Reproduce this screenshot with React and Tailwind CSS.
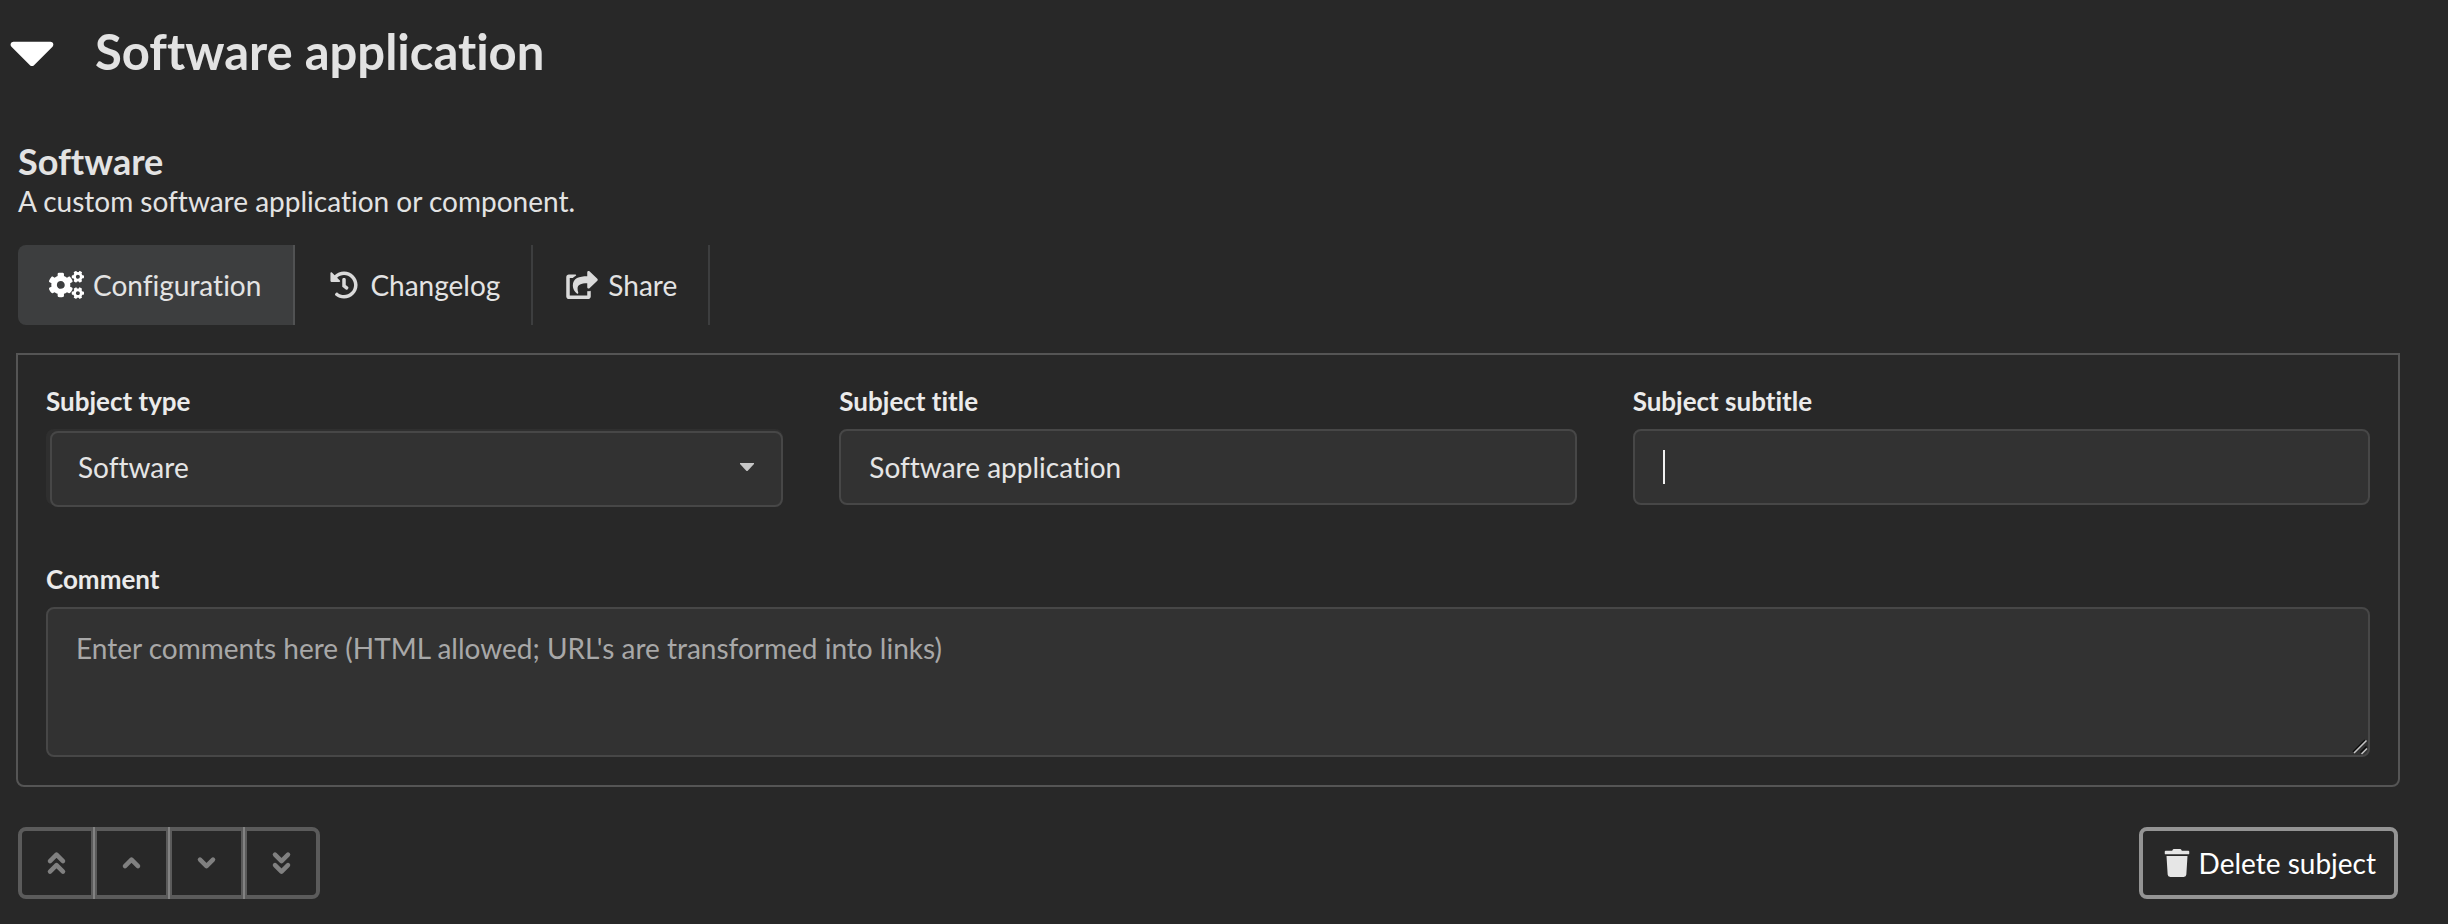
import { useState } from "react";
import { FaCaretDown, FaCogs, FaHistory, FaShareSquare, FaTrash } from "react-icons/fa";

const field =
  "block h-[76px] w-full rounded-lg border-2 border-[#474747] bg-[#323232] text-[#e5e5e5] focus:outline-none";
const label = "mb-[10px] block text-[26px] leading-9 font-bold text-[#ebebeb]";

const tabs = [
  { name: "Configuration", icon: FaCogs },
  { name: "Changelog", icon: FaHistory },
  { name: "Share", icon: FaShareSquare },
];

const moves = [
  { name: "Move to top", paths: ["M5 12.2 11.5 5.7l6.5 6.5", "M5 22.7 11.5 16.2l6.5 6.5"] },
  { name: "Move up", paths: ["M5 17.2 11.5 10.7l6.5 6.5"] },
  { name: "Move down", paths: ["M5 10.7 11.5 17.2l6.5-6.5"] },
  { name: "Move to bottom", paths: ["M5 5.7 11.5 12.2l6.5-6.5", "M5 16.2 11.5 22.7l6.5-6.5"] },
];

export default function App() {
  const [tab, setTab] = useState("Configuration");
  const [type, setType] = useState("Software");
  const [title, setTitle] = useState("Software application");
  const [subtitle, setSubtitle] = useState("");
  const [comment, setComment] = useState("");

  return (
    <div className="min-h-screen bg-[#282828] pt-[14px] pr-12 pb-6 pl-4 font-['Lato',sans-serif] text-[28px] text-[#e3e3e3] [font-variant-ligatures:none]">
      <h1 className="-ml-[7px] flex items-center text-[49px] leading-[74px] font-bold">
        <FaCaretDown className="mr-10 h-[74px] w-[46px] text-white" />
        Software application
      </h1>

      <div className="px-0.5">
        <h2 className="mt-[51px] text-[36px] leading-[44px] font-bold">Software</h2>
        <p className="leading-9">A custom software application or component.</p>
        <div className="mt-[26px] flex">
          {tabs.map(({ name, icon: Icon }) => (
            <button
              key={name}
              onClick={() => setTab(name)}
              className={`flex h-20 items-center gap-[10px] border-r-2 pr-[31px] pl-8 first:rounded-l-lg first:pr-8 ${
                tab === name ? "border-[#515253] bg-[#3d3e3f]" : "border-[#3d3e3f]"
              }`}
            >
              <span className="flex w-[33px] justify-center">
                <Icon className={name === "Configuration" ? "h-7 w-[35px] shrink-0 text-white" : "h-7 w-8 text-[#dadada]"} />
              </span>
              {name}
            </button>
          ))}
        </div>
      </div>

      <div className="mt-7 rounded-b-lg border-2 border-[#555] p-7">
        <div className="grid grid-cols-3 gap-14">
          <div>
            <label className={label} htmlFor="type">Subject type</label>
            <div className="relative h-[76px] rounded-lg bg-[#2f2f2f] pt-0.5 pl-1">
              <select
                id="type"
                className={`${field} appearance-none px-[26px] pb-1`}
                value={type}
                onChange={(e) => setType(e.target.value)}
              >
                <option>Software</option>
              </select>
              <svg viewBox="0 0 14 8" className="pointer-events-none absolute top-[34px] right-[29px] h-2 w-[14px]" fill="#c6c6c6">
                <path d="M0 0h14v1L7.5 8h-1L0 1z" />
              </svg>
            </div>
          </div>
          <div>
            <label className={label} htmlFor="title">Subject title</label>
            <input id="title" className={`${field} px-7`} value={title} onChange={(e) => setTitle(e.target.value)} />
          </div>
          <div>
            <label className={label} htmlFor="subtitle">Subject subtitle</label>
            <div className="relative">
              <input
                id="subtitle"
                className={`${field} px-7`}
                value={subtitle}
                onChange={(e) => setSubtitle(e.target.value)}
              />
              {subtitle === "" && <span className="pointer-events-none absolute top-[21px] left-[30px] h-[34px] w-0.5 bg-[#f0f0f0]" />}
            </div>
          </div>
        </div>

        <div className="mt-14">
          <label className={label} htmlFor="comment">Comment</label>
          <div className="relative">
            <textarea
              id="comment"
              className="block h-[150px] w-full resize-none rounded-lg border-2 border-[#474747] bg-[#323232] px-7 py-[18px] placeholder:text-[#a8a8a8] focus:outline-none"
              placeholder="Enter comments here (HTML allowed; URL's are transformed into links)"
              value={comment}
              onChange={(e) => setComment(e.target.value)}
            />
            <svg viewBox="0 0 16 16" className="pointer-events-none absolute right-0.5 bottom-0.5 h-4 w-4" fill="none" strokeWidth="1.5">
              <path d="M1 13 13 1M8.5 13.5l6-6" stroke="#0c0c0c" />
              <path d="M2 14 14.5 1.5M9.5 15 15 9.5" stroke="#c4c4c4" />
            </svg>
          </div>
        </div>
      </div>

      <div className="mt-10 flex justify-between px-0.5">
        <div className="flex text-[#808080]">
          {moves.map((m) => (
            <button
              key={m.name}
              aria-label={m.name}
              className="-ml-0.5 flex h-[72px] w-[77px] items-center justify-center border-4 border-white/24 first:ml-0 first:rounded-l-lg last:rounded-r-lg"
            >
              <svg viewBox="0 0 24 28" className="h-7 w-6" fill="none" stroke="currentColor" strokeWidth="4.5" strokeLinecap="round" strokeLinejoin="round">
                {m.paths.map((d) => (
                  <path key={d} d={d} />
                ))}
              </svg>
            </button>
          ))}
        </div>
        <button className="flex h-[72px] items-center gap-2 rounded-lg border-4 border-[#949494] pr-[18px] pl-5 text-white">
          <FaTrash className="text-[#e6e6e6]" />
          Delete subject
        </button>
      </div>
    </div>
  );
}
